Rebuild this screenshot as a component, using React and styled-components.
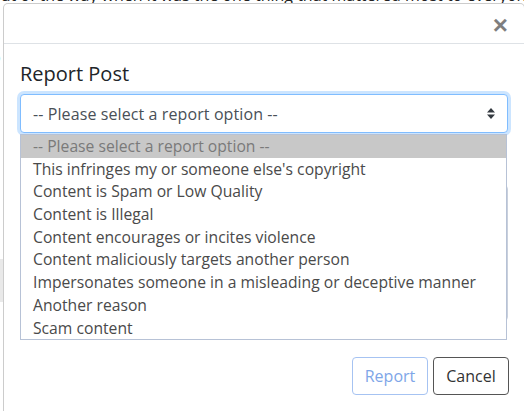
import React from 'react'
import styled, { createGlobalStyle } from 'styled-components'

const GlobalStyle = createGlobalStyle`
    html, body {
        margin: 0;
        padding: 0;
        background: #ffffff;
    }
    body {
        font-family: "Segoe UI", "Open Sans", "Noto Sans", sans-serif;
        color: #212529;
    }
`

const reportOptions = [
    '-- Please select a report option --',
    "This infringes my or someone else's copyright",
    'Content is Spam or Low Quality',
    'Content is Illegal',
    'Content encourages or incites violence',
    'Content maliciously targets another person',
    'Impersonates someone in a misleading or deceptive manner',
    'Another reason',
    'Scam content',
]

const Page = styled.div`
    position: relative;
    width: 524px;
    height: 411px;
    overflow: hidden;
    background: #ffffff;
`

const PageText = styled.div`
    margin: -20px 0 0 -9px;
    font-size: 16px;
    line-height: 31px;
    color: #222;
    p {
        margin: 0;
        white-space: nowrap;
    }
`

const GreyPatch = styled.div`
    width: 40px;
    height: 43px;
    margin: 93px 0 0 -20px;
    background: #e9e9e9;
    border-bottom: 24px solid #fff;
    box-shadow: 0 25px 0 -24px #ccc;
`

const Modal = styled.div`
    position: absolute;
    left: 3px;
    top: 3px;
    width: 522px;
    height: 440px;
    box-sizing: border-box;
    background: #ffffff;
    border: 1px solid rgba(0, 0, 0, 0.2);
    border-radius: 5px;
    display: flex;
    flex-direction: column;
`

const Header = styled.div`
    height: 39px;
    display: flex;
    align-items: center;
    justify-content: flex-end;
    padding-right: 16px;
    border-bottom: 1px solid #dee2e6;
`

const CloseButton = styled.button`
    border: 0;
    background: transparent;
    padding: 0;
    font-family: "Liberation Sans", Arial, sans-serif;
    font-size: 26px;
    font-weight: 700;
    line-height: 1;
    color: #000;
    opacity: 0.5;
    margin-top: 2px;
`

const Body = styled.div`
    padding: 18px 16px 16px;
`

const Title = styled.h5`
    margin: 0 0 8px;
    font-size: 20px;
    font-weight: 500;
    line-height: 24px;
    color: #212529;
`

const SelectWrap = styled.div`
    position: relative;
`

const SelectBox = styled.div`
    height: 39px;
    box-sizing: border-box;
    display: flex;
    align-items: center;
    justify-content: space-between;
    padding: 0 12px;
    border: 1px solid #80bdff;
    border-radius: 4px;
    box-shadow: 0 0 0 3px rgba(0, 123, 255, 0.2);
    font-size: 16px;
    letter-spacing: 0.1px;
    color: #495057;
    background: #fff;
`

const Dropdown = styled.ul`
    position: absolute;
    z-index: 2;
    top: 40px;
    left: 0;
    right: 1px;
    margin: 0;
    padding: 0;
    list-style: none;
    background: #fff;
    border: 1px solid #b7c2d6;
`

const Option = styled.li`
    height: 22.7px;
    line-height: 22.7px;
    padding: 0 12px;
    font-size: 15.7px;
    white-space: nowrap;
    color: ${p => (p.$selected ? '#7a7a7a' : '#4a4a4a')};
    background: ${p => (p.$selected ? '#c8c8c8' : '#fff')};
`

const Label = styled.label`
    display: block;
    margin: 20px 0 8px;
    font-size: 16px;
    line-height: 24px;
`

const TextArea = styled.div`
    height: 134px;
    border: 1px solid #c9d0dc;
    border-radius: 4px;
`

const Footer = styled.div`
    display: flex;
    justify-content: flex-end;
    gap: 5px;
    padding: 20px 15px 0 0;
`

const Button = styled.button`
    width: 76px;
    height: 38px;
    box-sizing: border-box;
    border-radius: 4px;
    background: #fff;
    font-family: inherit;
    font-size: 16px;
    border: 1px solid ${p => (p.$variant === 'primary' ? '#a6c3f2' : '#555')};
    color: ${p => (p.$variant === 'primary' ? '#7ea6e8' : '#333')};
`

const SortArrows = () => (
    <svg width="8" height="11" viewBox="0 0 4 5.4" aria-hidden="true">
        <path d="M2 0L0 2.2h4z M2 5.4L0 3.2h4z" fill="#343a40" />
    </svg>
)

export default function App() {
    return (
        <Page>
            <GlobalStyle />
            <PageText>
                <p>out of the way when it was the one thing that mattered most to everyone at the table</p>
                <p>t</p>
                <p>o</p>
                <p>.</p>
                <p>e</p>
                <p>s</p>
                <GreyPatch />
            </PageText>

            <Modal>
                <Header>
                    <CloseButton aria-label="Close">×</CloseButton>
                </Header>
                <Body>
                    <Title>Report Post</Title>
                    <SelectWrap>
                        <SelectBox>
                            <span>{reportOptions[0]}</span>
                            <SortArrows />
                        </SelectBox>
                        <Dropdown>
                            {reportOptions.map((x, i) => (
                                <Option key={x} $selected={i === 0}>{x}</Option>
                            ))}
                        </Dropdown>
                    </SelectWrap>
                    <Label>Details</Label>
                    <TextArea />
                </Body>
                <Footer>
                    <Button $variant="primary" disabled>Report</Button>
                    <Button>Cancel</Button>
                </Footer>
            </Modal>
        </Page>
    )
}
